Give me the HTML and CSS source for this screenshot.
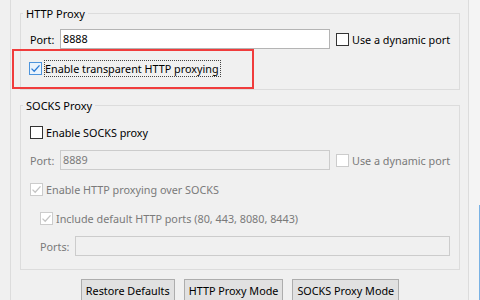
FILE: index.html
```html
<!DOCTYPE html>
<html>
<head>
<meta charset="utf-8">
<link rel="stylesheet" href="styles.css">
</head>
<body>
<div class="window">
  <div class="panel">
    <fieldset class="group http">
      <legend>HTTP Proxy</legend>
      <div class="row port-row">
        <span class="lbl">Port:</span>
        <div class="field">8888</div>
        <label class="check">
          <span class="box"></span>
          <span class="text">Use a dynamic port</span>
        </label>
      </div>
      <div class="row check-row marked">
        <label class="check">
          <span class="box checked">
            <svg width="11" height="11" viewBox="0 0 11 11"><path d="M1.5 5.6 L4.2 8.2 L9.5 2.4" fill="none" stroke="#2a7ad5" stroke-width="1.3"/></svg>
          </span>
          <span class="text focus">Enable transparent HTTP proxying</span>
        </label>
        <div class="annotation"></div>
      </div>
    </fieldset>

    <fieldset class="group socks">
      <legend>SOCKS Proxy</legend>
      <div class="row check-row">
        <label class="check">
          <span class="box"></span>
          <span class="text">Enable SOCKS proxy</span>
        </label>
      </div>
      <div class="row port-row disabled">
        <span class="lbl">Port:</span>
        <div class="field off">8889</div>
        <label class="check">
          <span class="box off"></span>
          <span class="text">Use a dynamic port</span>
        </label>
      </div>
      <div class="row check-row disabled">
        <label class="check">
          <span class="box off">
            <svg width="11" height="11" viewBox="0 0 11 11"><path d="M1.5 5.6 L4.2 8.2 L9.5 2.4" fill="none" stroke="#c4c4c4" stroke-width="1.3"/></svg>
          </span>
          <span class="text">Enable HTTP proxying over SOCKS</span>
        </label>
      </div>
      <div class="row check-row disabled indent">
        <label class="check">
          <span class="box off">
            <svg width="11" height="11" viewBox="0 0 11 11"><path d="M1.5 5.6 L4.2 8.2 L9.5 2.4" fill="none" stroke="#c4c4c4" stroke-width="1.3"/></svg>
          </span>
          <span class="text">Include default HTTP ports (80, 443, 8080, 8443)</span>
        </label>
      </div>
      <div class="row ports-row disabled indent">
        <span class="lbl">Ports:</span>
        <div class="field off wide"></div>
      </div>
    </fieldset>

    <div class="buttons">
      <button class="btn">Restore Defaults</button>
      <button class="btn">HTTP Proxy Mode</button>
      <button class="btn">SOCKS Proxy Mode</button>
    </div>
  </div>
  <div class="edge"><div class="edge-line"></div></div>
</div>
</body>
</html>
```

FILE: styles.css
```css
* { box-sizing: border-box; }
html, body {
  margin: 0;
  padding: 0;
  width: 480px;
  height: 300px;
  overflow: hidden;
  background: #f0f0f0;
  font-family: "Noto Sans", "Open Sans", sans-serif;
  font-size: 10.8px;
  color: #000;
  white-space: nowrap;
}
.window {
  display: flex;
  height: 300px;
  padding-left: 10px;
}
.panel {
  width: 459px;
  height: 300px;
  border-left: 1px solid #dcdcdc;
  border-right: 1px solid #dcdcdc;
  padding: 6px 8px 0 9px;
}
.edge {
  flex: 1;
  background: #f4f4f4;
  display: flex;
  justify-content: flex-end;
}
.edge-line {
  width: 1px;
  margin-top: 205px;
  background: #7ab2e4;
}
.group {
  margin: 0;
  border: 1px solid #dcdcdc;
  padding: 8px 0 11px 9px;
  min-width: 0;
}
.group legend {
  line-height: 15px;
  padding: 0 3px;
  margin-left: -7px;
  font-size: 11px;
}
.group.socks {
  margin-top: 8px;
  padding-top: 9px;
  padding-bottom: 13px;
}
.row {
  display: flex;
  align-items: center;
  height: 20px;
}
.port-row .lbl { width: 30px; }
.ports-row .lbl { width: 35px; }
.field {
  width: 270px;
  height: 20px;
  background: #fff;
  border: 1px solid #b4b4b4;
  padding: 0 2px;
  line-height: 18px;
}
.field.off {
  background: #f0f0f0;
  border-color: #cccccc;
  color: #7a7a7a;
}
.field.wide { width: 375px; }
.port-row .check { margin-left: 6px; }
.check {
  display: flex;
  align-items: center;
}
.box {
  width: 13px;
  height: 13px;
  border: 1px solid #333;
  background: #fff;
  display: flex;
  align-items: center;
  justify-content: center;
  flex: none;
}
.box.checked {
  border-color: #4d94dc;
  background: #eaf3fc;
  margin-left: -1px;
}
.box.off {
  border-color: #cccccc;
  background: #fff;
}
.check .text { margin-left: 3px; }
.check .focus {
  margin-left: 2px;
  border: 1px dotted #444;
  padding: 0 1px 0 0;
  line-height: 15px;
}
.check-row.marked {
  margin-top: 9px;
  position: relative;
}
.socks .port-row { margin-top: 8px; }
.socks .check-row.disabled { margin-top: 9px; }
.socks .ports-row { margin-top: 8px; }
.disabled { color: #7a7a7a; }
.indent { padding-left: 10px; }
.annotation {
  position: absolute;
  left: -18px;
  top: -9px;
  width: 242px;
  height: 40px;
  border: 2px solid #f03c3c;
  pointer-events: none;
}
.buttons {
  display: flex;
  justify-content: center;
  gap: 9px;
  margin-top: 9px;
}
.btn {
  font-family: inherit;
  font-size: 10.8px;
  height: 22px;
  padding: 0 4px;
  background: #e1e1e1;
  border: 1px solid #adadad;
  color: #000;
  border-radius: 0;
}
```
